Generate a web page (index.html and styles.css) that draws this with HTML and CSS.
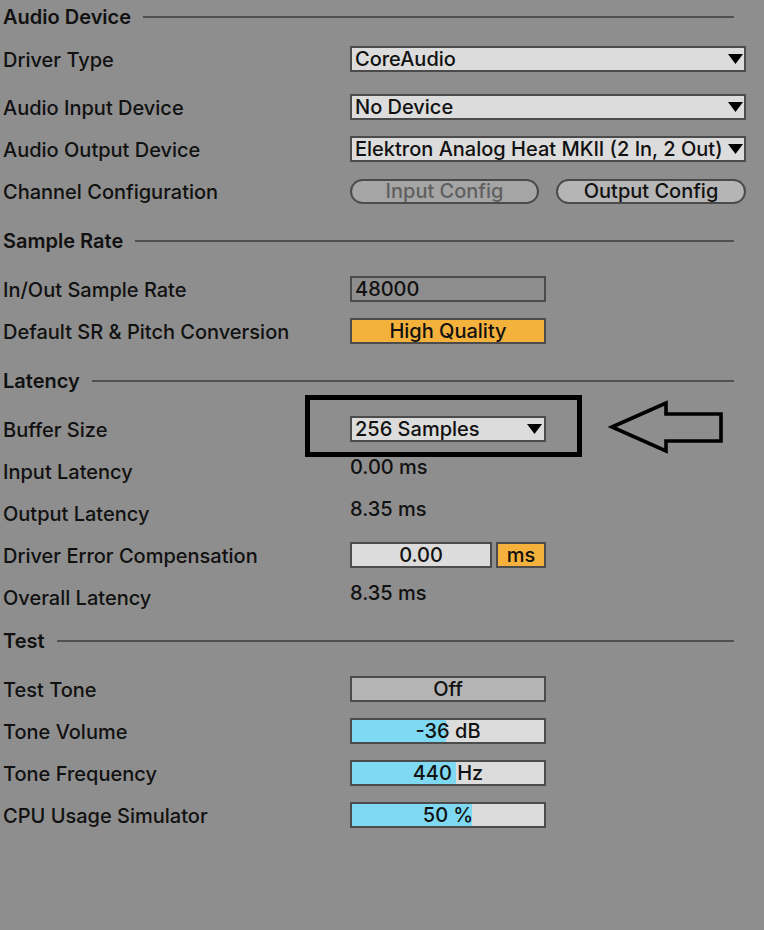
FILE: index.html
```html
<!DOCTYPE html>
<html lang="en">
<head>
<meta charset="utf-8">
<title>Audio Preferences</title>
<link rel="stylesheet" href="styles.css">
</head>
<body>
<div class="prefs">
  <section class="group">
    <div class="group-head"><span class="group-title">Audio Device</span><span class="rule"></span></div>
    <div class="row first-tight"><span class="label">Driver Type</span>
      <div class="select wide"><span class="select-text">CoreAudio</span><svg class="caret" viewBox="0 0 15 10"><polygon points="0,0 15,0 7.5,10"/></svg></div></div>
    <div class="row spaced"><span class="label">Audio Input Device</span>
      <div class="select wide"><span class="select-text">No Device</span><svg class="caret" viewBox="0 0 15 10"><polygon points="0,0 15,0 7.5,10"/></svg></div></div>
    <div class="row"><span class="label">Audio Output Device</span>
      <div class="select wide"><span class="select-text">Elektron Analog Heat MKII (2 In, 2 Out)</span><svg class="caret" viewBox="0 0 15 10"><polygon points="0,0 15,0 7.5,10"/></svg></div></div>
    <div class="row"><span class="label">Channel Configuration</span>
      <div class="pills"><span class="pill disabled">Input Config</span><span class="pill">Output Config</span></div></div>
  </section>

  <section class="group later">
    <div class="group-head"><span class="group-title">Sample Rate</span><span class="rule"></span></div>
    <div class="row first"><span class="label">In/Out Sample Rate</span>
      <div class="field plain">48000</div></div>
    <div class="row"><span class="label">Default SR &amp; Pitch Conversion</span>
      <div class="field orange centered">High Quality</div></div>
  </section>

  <section class="group later">
    <div class="group-head"><span class="group-title">Latency</span><span class="rule"></span></div>
    <div class="row first"><span class="label">Buffer Size</span>
      <div class="select narrow"><span class="select-text">256 Samples</span><svg class="caret" viewBox="0 0 15 10"><polygon points="0,0 15,0 7.5,10"/></svg></div></div>
    <div class="row"><span class="label">Input Latency</span><span class="value">0.00 ms</span></div>
    <div class="row"><span class="label">Output Latency</span><span class="value">8.35 ms</span></div>
    <div class="row"><span class="label">Driver Error Compensation</span>
      <div class="combo"><div class="field light centered comp">0.00</div><div class="field orange centered unit">ms</div></div></div>
    <div class="row"><span class="label">Overall Latency</span><span class="value">8.35 ms</span></div>
  </section>

  <section class="group test">
    <div class="group-head"><span class="group-title">Test</span><span class="rule"></span></div>
    <div class="row first"><span class="label">Test Tone</span>
      <div class="field toggle centered">Off</div></div>
    <div class="row"><span class="label">Tone Volume</span>
      <div class="field slider"><span class="fill" style="width:49%"></span><span class="slider-text">-36 dB</span></div></div>
    <div class="row"><span class="label">Tone Frequency</span>
      <div class="field slider"><span class="fill" style="width:54%"></span><span class="slider-text">440 Hz</span></div></div>
    <div class="row"><span class="label">CPU Usage Simulator</span>
      <div class="field slider"><span class="fill" style="width:62.5%"></span><span class="slider-text">50 %</span></div></div>
  </section>

  <div class="highlight-box"></div>
  <svg class="pointer" viewBox="0 0 120 56" width="120" height="56">
    <polygon points="5,27 59,3 59,14 114,14 114,41 59,41 59,51" fill="none" stroke="#000" stroke-width="3.6" stroke-linejoin="miter"/>
  </svg>
</div>
</body>
</html>
```

FILE: styles.css
```css
html, body {
  margin: 0;
  padding: 0;
  background: #8e8e8e;
}

body {
  font-family: Inter, "Noto Sans", "Liberation Sans", sans-serif;
  font-size: 20px;
  font-weight: 500;
  color: #111;
}

.prefs {
  position: relative;
  width: 764px;
  height: 930px;
  box-sizing: border-box;
  padding: 0 30px 0 3px;
}

.group.later {
  margin-top: 12px;
}

.group.test {
  margin-top: 6px;
}

.group-head {
  display: flex;
  align-items: center;
  height: 34px;
}

.group-title {
  font-weight: 600;
}

.rule {
  flex: 1;
  height: 2px;
  background: #505050;
  margin-left: 12px;
}

.row {
  display: flex;
  align-items: center;
  height: 42px;
}

.row.first-tight {
  margin-top: 4px;
}

.row.first {
  margin-top: 10px;
}

.row.spaced {
  margin-top: 6px;
}

.label {
  width: 347px;
  flex: none;
  white-space: nowrap;
  padding-top: 1px;
}

.value {
  margin-bottom: 8px;
}

.select {
  flex: none;
  display: flex;
  align-items: center;
  justify-content: space-between;
  box-sizing: border-box;
  height: 26px;
  border: 2px solid #4b4b4b;
  background: #dcdcdc;
  padding: 0 1px 0 3px;
  white-space: nowrap;
}

.select-text {
  overflow: hidden;
  min-width: 0;
}

.select.wide {
  width: 396px;
}

.select.narrow {
  width: 196px;
  padding-right: 2px;
}

.caret {
  width: 15px;
  height: 10px;
  flex: none;
}

.caret polygon {
  fill: #000;
}

.pills {
  flex: none;
  display: flex;
  gap: 17px;
}

.pill {
  box-sizing: border-box;
  width: 189px;
  height: 25px;
  border: 2px solid #4b4b4b;
  border-radius: 13px;
  background: #b5b5b5;
  display: flex;
  align-items: center;
  justify-content: center;
  color: #111;
}

.pill + .pill {
  width: 190px;
}

.pill.disabled {
  background: #a5a5a5;
  color: #606060;
}

.field {
  flex: none;
  box-sizing: border-box;
  width: 196px;
  height: 26px;
  border: 2px solid #4b4b4b;
  display: flex;
  align-items: center;
  padding: 0 3px;
  white-space: nowrap;
}

.field.centered {
  justify-content: center;
}

.field.plain {
  background: #8e8e8e;
}

.field.orange {
  background: #f4b23d;
}

.field.light {
  background: #dcdcdc;
}

.combo {
  flex: none;
  display: flex;
  gap: 4px;
}

.field.comp {
  width: 142px;
}

.field.unit {
  width: 50px;
}

.field.toggle {
  background: #b4b4b4;
}

.field.slider {
  position: relative;
  background: #dcdcdc;
  justify-content: center;
  padding: 0;
}

.fill {
  position: absolute;
  left: 0;
  top: 0;
  bottom: 0;
  background: #7fd9f2;
}

.slider-text {
  position: relative;
}

.highlight-box {
  position: absolute;
  left: 305px;
  top: 395px;
  width: 277px;
  height: 62px;
  box-sizing: border-box;
  border: 5px solid #000;
}

.pointer {
  position: absolute;
  left: 607px;
  top: 400px;
}
```
